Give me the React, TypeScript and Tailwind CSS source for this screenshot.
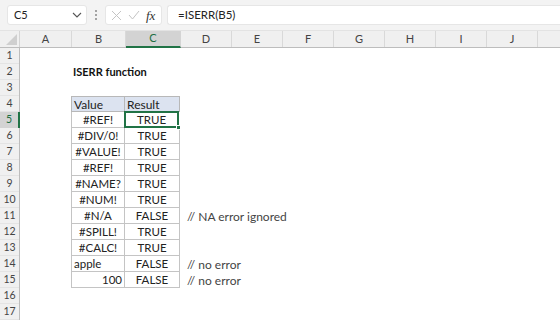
import React from "react";

const cols = [
  { l: "A", w: 52 },
  { l: "B", w: 54 },
  { l: "C", w: 55 },
  { l: "D", w: 51 },
  { l: "E", w: 51 },
  { l: "F", w: 51 },
  { l: "G", w: 51 },
  { l: "H", w: 51 },
  { l: "I", w: 51 },
  { l: "J", w: 51 },
  { l: "", w: 51 },
];

type Row = { b: string; c: string; bAlign: "left" | "center" | "right"; note?: string };

const data: Row[] = [
  { b: "#REF!", c: "TRUE", bAlign: "center" },
  { b: "#DIV/0!", c: "TRUE", bAlign: "center" },
  { b: "#VALUE!", c: "TRUE", bAlign: "center" },
  { b: "#REF!", c: "TRUE", bAlign: "center" },
  { b: "#NAME?", c: "TRUE", bAlign: "center" },
  { b: "#NUM!", c: "TRUE", bAlign: "center" },
  { b: "#N/A", c: "FALSE", bAlign: "center", note: "// NA error ignored" },
  { b: "#SPILL!", c: "TRUE", bAlign: "center" },
  { b: "#CALC!", c: "TRUE", bAlign: "center" },
  { b: "apple", c: "FALSE", bAlign: "left", note: "// no error" },
  { b: "100", c: "FALSE", bAlign: "right", note: "// no error" },
];

const font = { fontFamily: "Lato, 'Open Sans', sans-serif" };

export default function App() {
  const rows = Array.from({ length: 17 }, (_, i) => i + 1);
  return (
    <div className="w-[560px] h-[320px] overflow-hidden bg-white text-[#222]" style={font}>
      {/* toolbar */}
      <div className="h-[31px] bg-[#f3f3f3] flex items-center border-b border-[#e3e3e3]">
        <div className="ml-[7px] w-[80px] h-[20px] bg-white rounded-[3px] border border-[#e6e6e6] flex items-center justify-between pl-[6px] pr-[4px]">
          <span className="text-[11px] text-[#222]">C5</span>
          <svg width="10" height="6" viewBox="0 0 10 6">
            <path d="M1 1 L5 5 L9 1" fill="none" stroke="#555" strokeWidth="1.1" />
          </svg>
        </div>
        <div className="w-[18px] flex flex-col items-center gap-[2px]">
          <span className="w-[2px] h-[2px] bg-[#888] rounded-full" />
          <span className="w-[2px] h-[2px] bg-[#888] rounded-full" />
          <span className="w-[2px] h-[2px] bg-[#888] rounded-full" />
        </div>
        <div className="w-[57px] h-[20px] bg-white rounded-[3px] border border-[#e6e6e6] flex items-center pl-[5px] gap-[6px]">
          <svg width="11" height="11" viewBox="0 0 11 11">
            <path d="M1 1 L10 10 M10 1 L1 10" stroke="#c4c4c4" strokeWidth="1" />
          </svg>
          <svg width="12" height="10" viewBox="0 0 12 10">
            <path d="M1 5 L4.5 9 L11 1" fill="none" stroke="#c4c4c4" strokeWidth="1" />
          </svg>
          <span className="text-[13px] italic text-[#333] leading-none" style={{ fontFamily: "'Liberation Serif', serif" }}>
            fx
          </span>
        </div>
        <div className="ml-[5px] flex-1 h-[20px] bg-white rounded-l-[3px] border border-[#e6e6e6] border-r-0 flex items-center pl-[10px]">
          <span className="text-[11.5px] text-[#222]">=ISERR(B5)</span>
        </div>
      </div>

      {/* column headers */}
      <div className="flex h-[17px] bg-[#f0f0f0] border-b border-[#bdbdbd]">
        <div className="w-[20px] shrink-0 relative border-r border-[#d4d4d4]">
          <div className="absolute right-[2px] bottom-[2px] w-0 h-0 border-l-[11px] border-l-transparent border-b-[11px] border-b-[#cfcfcf]" />
        </div>
        {cols.map((c, i) => (
          <div
            key={i}
            style={{ width: c.w }}
            className={
              c.l === "C"
                ? "shrink-0 flex items-center justify-center text-[11px] bg-[#d3d3d3] text-[#1e6e42] border-b-2 border-[#217346] border-r border-r-[#d4d4d4] -mb-px"
                : "shrink-0 flex items-center justify-center text-[11px] text-[#444] border-r border-[#d9d9d9]"
            }
          >
            {c.l}
          </div>
        ))}
      </div>

      {/* body */}
      <div className="flex">
        <div className="w-[20px] shrink-0 bg-[#f0f0f0] border-r border-[#bdbdbd]">
          {rows.map((r) => (
            <div
              key={r}
              className={
                r === 5
                  ? "h-[16px] flex items-center justify-center text-[10.5px] bg-[#d3d3d3] text-[#1e6e42] border-r-2 border-[#217346] -mr-px"
                  : "h-[16px] flex items-center justify-center text-[10.5px] text-[#444] border-b border-[#e4e4e4]"
              }
            >
              {r}
            </div>
          ))}
        </div>
        <div className="flex-1 relative">
          <div className="h-[16px]" />
          <div className="h-[16px] flex items-center pl-[53px]">
            <span className="text-[11px] font-bold text-[#111]">ISERR function</span>
          </div>
          <div className="h-[16px]" />
          <div className="ml-[51px] flex flex-col">
            <div className="flex h-[16px]">
              <div className="w-[54px] bg-[#dce3f0] border border-[#b8b8b8] flex items-center pl-[2px] text-[12px] pt-[1px]">Value</div>
              <div className="w-[55px] bg-[#dce3f0] border border-l-0 border-[#b8b8b8] flex items-center pl-[2px] text-[12px] pt-[1px]">Result</div>
            </div>
            {data.map((d, i) => (
              <div key={i} className="flex h-[16px]">
                <div
                  className={
                    "w-[54px] border border-t-0 border-[#c4c4c4] flex items-center px-[2px] text-[11.5px] pt-[1px] " +
                    (d.bAlign === "center" ? "justify-center" : d.bAlign === "right" ? "justify-end" : "justify-start")
                  }
                >
                  {d.b}
                </div>
                <div
                  className={
                    i === 0
                      ? "w-[55px] border-2 border-[#217346] -mt-px -ml-px h-[17px] flex items-center justify-center text-[11.5px] pt-[1px] relative z-10"
                      : "w-[55px] border border-t-0 border-l-0 border-[#c4c4c4] flex items-center justify-center text-[11.5px] pt-[1px]"
                  }
                >
                  {d.c}
                  {i === 0 && (
                    <span className="absolute -right-[4px] -bottom-[4px] w-[5px] h-[5px] bg-[#217346] border border-white" />
                  )}
                </div>
                {d.note && (
                  <div className="pl-[7px] flex items-center text-[12px] pt-[1px] text-[#444] whitespace-nowrap">{d.note}</div>
                )}
              </div>
            ))}
          </div>
        </div>
      </div>
    </div>
  );
}
